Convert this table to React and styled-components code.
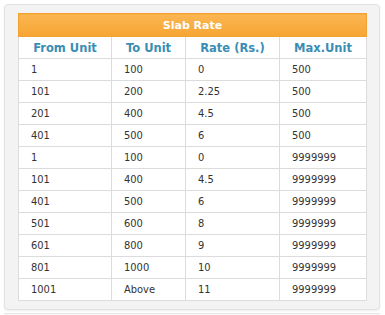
import React from "react";
import styled, { createGlobalStyle } from "styled-components";

const GlobalStyle = createGlobalStyle`
  body {
    margin: 0;
    background: #ffffff;
    font-family: "DejaVu Sans", Verdana, sans-serif;
  }
`;

const Page = styled.div`
  padding: 4px 5px 0 4px;
`;

const Panel = styled.div`
  background: #f3f3f3;
  border: 1px solid #e2e2e2;
  border-radius: 4px;
  padding: 8px 14px 8px 13px;
  box-shadow: 0 1px 2px rgba(0, 0, 0, 0.08);
`;

const NextPanel = styled.div`
  margin-top: 3px;
  height: 6px;
  border-top: 1px solid #e6e6e6;
  background: #f7f7f7;
`;

const Table = styled.table`
  width: 348px;
  border-collapse: collapse;
  table-layout: fixed;
  background: #ffffff;
  font-size: 11px;
`;

const Caption = styled.th`
  height: 22px;
  padding: 0;
  background: linear-gradient(#fbb652, #f6a532);
  color: #ffffff;
  font-weight: bold;
  font-size: 11px;
  text-align: center;
  border: 1px solid #f2a232;
`;

const Head = styled.th`
  height: 21px;
  padding: 0;
  color: #3a8db5;
  font-weight: bold;
  font-size: 11.5px;
  text-align: center;
  border: 1px solid #dcdcdc;
`;

const Cell = styled.td`
  height: 21px;
  padding: 0 0 0 12px;
  color: #333333;
  font-family: "DejaVu Sans Condensed", "DejaVu Sans", sans-serif;
  font-size: 11px;
  border: 1px solid #dcdcdc;
`;

const widths = [93, 74, 94, 87];

const rows = [
  ["1", "100", "0", "500"],
  ["101", "200", "2.25", "500"],
  ["201", "400", "4.5", "500"],
  ["401", "500", "6", "500"],
  ["1", "100", "0", "9999999"],
  ["101", "400", "4.5", "9999999"],
  ["401", "500", "6", "9999999"],
  ["501", "600", "8", "9999999"],
  ["601", "800", "9", "9999999"],
  ["801", "1000", "10", "9999999"],
  ["1001", "Above", "11", "9999999"],
];

export default function App() {
  return (
    <Page>
      <GlobalStyle />
      <Panel>
        <Table>
          <colgroup>
            {widths.map((w, i) => (
              <col key={i} style={{ width: w }} />
            ))}
          </colgroup>
          <thead>
            <tr>
              <Caption colSpan={4}>Slab Rate</Caption>
            </tr>
            <tr>
              <Head>From Unit</Head>
              <Head>To Unit</Head>
              <Head>Rate (Rs.)</Head>
              <Head>Max.Unit</Head>
            </tr>
          </thead>
          <tbody>
            {rows.map((r, i) => (
              <tr key={i}>
                {r.map((v, j) => (
                  <Cell key={j}>{v}</Cell>
                ))}
              </tr>
            ))}
          </tbody>
        </Table>
      </Panel>
      <NextPanel />
    </Page>
  );
}
